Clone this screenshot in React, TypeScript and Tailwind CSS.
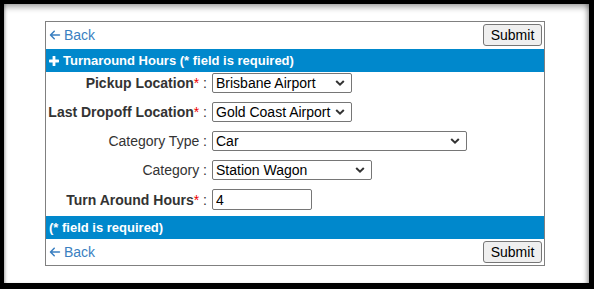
import type { ReactNode } from 'react';

const FONT = { fontFamily: '"Liberation Sans", Arial, sans-serif' };

function ArrowLeftIcon() {
  return (
    <svg width="12" height="12" viewBox="0 0 448 512" className="fill-[#3a7fc1]">
      <path d="M9.4 233.4c-12.5 12.5-12.5 32.8 0 45.3l160 160c12.5 12.5 32.8 12.5 45.3 0s12.5-32.8 0-45.3L109.2 288H416c17.7 0 32-14.3 32-32s-14.3-32-32-32H109.3L214.6 118.6c12.5-12.5 12.5-32.8 0-45.3s-32.8-12.5-45.3 0l-160 160z" />
    </svg>
  );
}

function PlusIcon() {
  return (
    <svg width="10" height="10" viewBox="0 0 10 10" className="fill-white">
      <rect x="3.6" y="0" width="2.8" height="10" rx="0.6" />
      <rect x="0" y="3.6" width="10" height="2.8" rx="0.6" />
    </svg>
  );
}

function Chevron() {
  return (
    <svg width="10" height="7" viewBox="0 0 10 7" className="pointer-events-none absolute right-[7px] top-1/2 -translate-y-1/2">
      <path d="M1.2 1.5 5 5.2 8.8 1.5" fill="none" stroke="#333" strokeWidth="2" />
    </svg>
  );
}

function ActionRow() {
  return (
    <div className="flex h-[26px] items-center justify-between pl-[3px] pr-[2px]">
      <a href="#" className="flex items-center gap-[3px] text-[14px] text-[#3a7fc1]">
        <ArrowLeftIcon />
        <span>Back</span>
      </a>
      <button className="h-[22px] w-[59px] rounded-[3px] border border-[#767676] bg-[#efefef] text-[14px] leading-none text-black">
        Submit
      </button>
    </div>
  );
}

function Label({ children, required }: { children: ReactNode; required?: boolean }) {
  return (
    <div className={`text-right text-[14px] leading-[20px] text-[#333] ${required ? 'font-bold' : ''}`}>
      {children}
      {required && <span className="font-normal text-[#e00]">*</span>}
      <span className="font-normal"> :</span>
    </div>
  );
}

function Select({ value, width }: { value: string; width: string }) {
  return (
    <div className={`relative h-[20px] ${width}`}>
      <select
        defaultValue={value}
        className="block h-full w-full appearance-none rounded-[2px] border border-[#767676] bg-white pl-[3px] text-[14px] leading-[18px] text-black"
      >
        <option>{value}</option>
      </select>
      <Chevron />
    </div>
  );
}

export default function App() {
  return (
    <div className="h-[289px] w-[594px] bg-black pb-[6px] pl-[4px] pr-[5px] pt-[4px]" style={FONT}>
      <div className="h-full bg-white pl-[41px] pt-[17px] shadow-[inset_0_6px_6px_-3px_rgba(0,0,0,0.35),inset_-5px_0_5px_-3px_rgba(0,0,0,0.35),inset_3px_0_3px_-2px_rgba(0,0,0,0.3)]">
        <div className="w-[500px] border border-[#808080]">
          <ActionRow />
          <div className="mt-[1px] flex h-[23px] items-center gap-[4px] bg-[#0088cc] pl-[3px] text-[13px] font-bold text-white">
            <PlusIcon />
            <span>Turnaround Hours (* field is required)</span>
          </div>
          <div className="grid grid-cols-[161px_1fr] items-center gap-x-[5px] gap-y-[9px] pb-[6px] pt-[1px]">
            <Label required>Pickup Location</Label>
            <Select value="Brisbane Airport" width="w-[140px]" />
            <Label required>Last Dropoff Location</Label>
            <Select value="Gold Coast Airport" width="w-[140px]" />
            <Label>Category Type</Label>
            <Select value="Car" width="w-[255px]" />
            <Label>Category</Label>
            <Select value="Station Wagon" width="w-[160px]" />
            <Label required>Turn Around Hours</Label>
            <input
              defaultValue="4"
              className="block h-[21px] w-[100px] rounded-[2px] border border-[#767676] pl-[3px] text-[14px] leading-[19px] text-black"
            />
          </div>
          <div className="flex h-[23px] items-center bg-[#0088cc] pl-[3px] text-[13px] font-bold text-white">
            (* field is required)
          </div>
          <ActionRow />
        </div>
      </div>
    </div>
  );
}
